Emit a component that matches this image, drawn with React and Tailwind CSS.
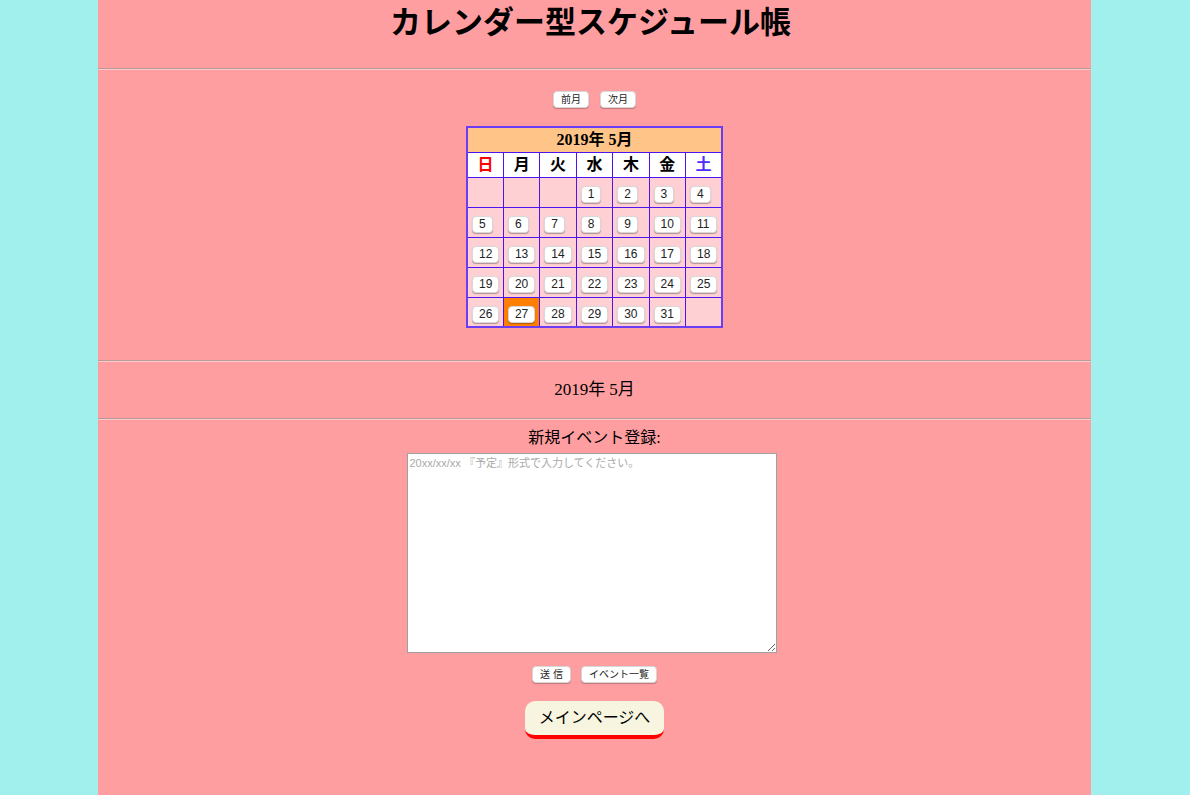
import React from "react";

const serif = "font-['Liberation_Serif','Noto_Sans_CJK_JP',serif]";
const sans = "font-['Liberation_Sans','Noto_Sans_CJK_JP',sans-serif]";

function SmallBtn({ children, className = "" }) {
  return (
    <button
      className={`${sans} h-[17px] px-[7px] text-[10px] leading-[15px] text-[#222] bg-white border border-[#d8d8d8] rounded-[4px] shadow-[0_1px_1px_rgba(0,0,0,0.25)] ${className}`}
    >
      {children}
    </button>
  );
}

function Hr() {
  return <div className="h-[2px] border-t border-t-[#b79c9c] border-b border-b-[#ffc9c9]" />;
}

const weeks = [
  [null, null, null, 1, 2, 3, 4],
  [5, 6, 7, 8, 9, 10, 11],
  [12, 13, 14, 15, 16, 17, 18],
  [19, 20, 21, 22, 23, 24, 25],
  [26, 27, 28, 29, 30, 31, null],
];

const days = ["日", "月", "火", "水", "木", "金", "土"];

export default function App() {
  return (
    <div className="min-h-screen bg-[#a2f0ee]">
      <div className="w-[993px] ml-[98px] min-h-screen bg-[#ff9ea0] text-black">
        <h1 className={`${serif} text-[31px] font-bold text-center leading-[46px] pb-[22px] pr-[8px]`}>
          カレンダー型スケジュール帳
        </h1>
        <Hr />
        <div className="pt-[21px] pb-[32px]">
          <div className="flex justify-center gap-[11px]">
            <SmallBtn>前月</SmallBtn>
            <SmallBtn>次月</SmallBtn>
          </div>
          <div className="flex justify-center mt-[18px]">
            <table className="w-[257px] table-fixed border-collapse border-2 border-[#6a3cf4]">
              <tbody>
                <tr>
                  <td
                    colSpan={7}
                    className={`${serif} h-[25px] p-0 bg-[#ffc488] text-center text-[16px] leading-[20px] font-bold border border-[#4c14f0]`}
                  >
                    2019年 5月
                  </td>
                </tr>
                <tr>
                  {days.map((d, i) => (
                    <td
                      key={d}
                      className={`${serif} h-[25px] p-0 bg-white text-center text-[16px] leading-[20px] font-bold border border-[#4c14f0] ${
                        i === 0 ? "text-[#ff0000]" : i === 6 ? "text-[#4d2cff]" : "text-black"
                      }`}
                    >
                      {d}
                    </td>
                  ))}
                </tr>
                {weeks.map((w, wi) => (
                  <tr key={wi}>
                    {w.map((n, i) => (
                      <td
                        key={i}
                        className={`h-[30px] p-0 pl-[4px] text-left align-middle border border-[#4c14f0] ${
                          n === 27 ? "bg-[#ff7f00]" : "bg-[#ffd0d3]"
                        }`}
                      >
                        {n && (
                          <button
                            className={`${sans} h-[17px] px-[6px] text-[12px] leading-[15px] text-[#222] bg-white border border-[#d8d8d8] rounded-[4px] shadow-[0_1px_1px_rgba(0,0,0,0.3)]`}
                          >
                            {n}
                          </button>
                        )}
                      </td>
                    ))}
                  </tr>
                ))}
              </tbody>
            </table>
          </div>
        </div>
        <Hr />
        <div className={`${serif} h-[56px] flex items-center justify-center text-[17px]`}>2019年 5月</div>
        <Hr />
        <div className="flex flex-col items-center pt-[8px]">
          <div className={`${serif} text-[16px] leading-[20px]`}>新規イベント登録:</div>
          <textarea
            placeholder="20xx/xx/xx 『予定』形式で入力してください。"
            className={`${sans} mt-[5px] mr-[6px] w-[370px] h-[200px] bg-white border border-[#a0a0a0] px-[2px] py-[2px] text-[11px] leading-[14px] placeholder:text-[#a9a9a9] outline-none`}
          />
          <div className="flex gap-[10px] mt-[13px]">
            <SmallBtn>送 信</SmallBtn>
            <SmallBtn>イベント一覧</SmallBtn>
          </div>
          <button
            className={`${sans} mt-[18px] w-[139px] h-[38px] bg-[#f7f5df] rounded-[10px] border-b-[4px] border-b-[#ff0000] text-[16px] text-black`}
          >
            メインページへ
          </button>
        </div>
      </div>
    </div>
  );
}
